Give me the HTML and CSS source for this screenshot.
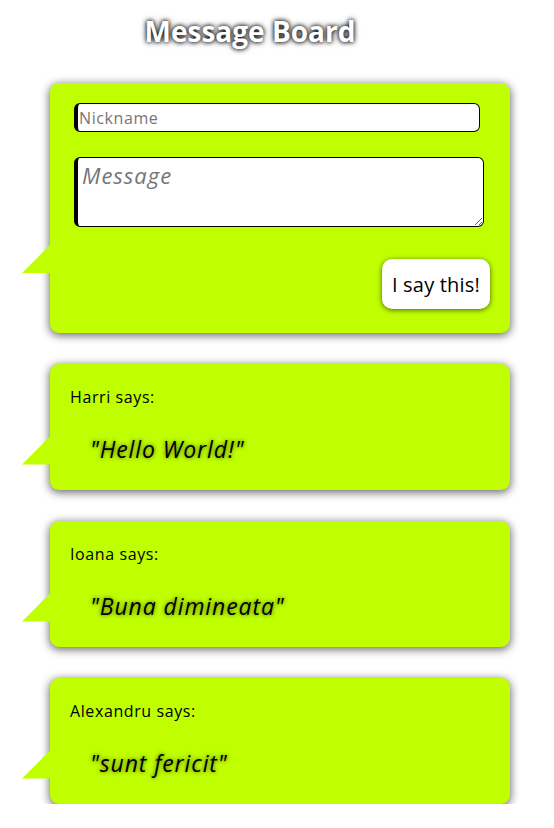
FILE: index.html
```html
<!DOCTYPE html>
<html>
<head>
<meta charset="utf-8">
<link rel="stylesheet" href="styles.css">
</head>
<body>
<h1 class="title">Message Board</h1>
<div class="board">
  <form class="card form-card">
    <input class="nick" type="text" placeholder="Nickname">
    <textarea class="msg" placeholder="Message"></textarea>
    <div class="actions"><button class="say" type="button">I say this!</button></div>
    <span class="tail tail-form"></span>
  </form>
  <div class="card post">
    <div class="author">Harri says:</div>
    <div class="quote">"Hello World!"</div>
    <span class="tail tail-post"></span>
  </div>
  <div class="card post">
    <div class="author">Ioana says:</div>
    <div class="quote">"Buna dimineata"</div>
    <span class="tail tail-post"></span>
  </div>
  <div class="card post">
    <div class="author">Alexandru says:</div>
    <div class="quote">"sunt fericit"</div>
    <span class="tail tail-post"></span>
  </div>
</div>
</body>
</html>
```
FILE: styles.css
```css
html, body {
  margin: 0;
  padding: 0;
  background: #fff;
}
body {
  font-family: "Open Sans", "Liberation Sans", sans-serif;
  color: #000;
}
.title {
  margin: 0;
  width: 500px;
  padding-top: 13px;
  text-align: center;
  font-size: 28px;
  line-height: 37px;
  font-weight: 700;
  color: #fff;
  text-shadow: 0 0 4px #000, 0 0 6px rgba(0,0,0,0.7);
}
.board {
  display: flex;
  flex-direction: column;
  gap: 30.5px;
  padding: 33px 0 0 50px;
}
.card {
  position: relative;
  width: 460px;
  box-sizing: border-box;
  background: #bfff00;
  border-radius: 9px;
  box-shadow: 0 2px 8px 1px rgba(0,0,0,0.55);
  margin: 0;
}
.form-card {
  height: 250px;
  padding: 20px 26px 0 24px;
  display: flex;
  flex-direction: column;
}
.nick {
  width: 406px;
  height: 29px;
  box-sizing: border-box;
  border: 1px solid #000;
  border-left: 4px solid #000;
  border-radius: 6px;
  padding: 0 0 0 1px;
  font-family: inherit;
  font-size: 16px;
  letter-spacing: 0.6px;
  background: #fff;
  outline: none;
}
.msg {
  margin-top: 25px;
  width: 410px;
  height: 70px;
  box-sizing: border-box;
  border: 1px solid #000;
  border-left: 4px solid #000;
  border-radius: 6px;
  padding: 2px 4px;
  font-family: inherit;
  font-size: 22px;
  letter-spacing: 1px;
  background: #fff;
  outline: none;
}
.nick::placeholder { color: #757575; }
.msg::placeholder { color: #757575; font-style: italic; }
.actions {
  display: flex;
  justify-content: flex-end;
  margin-top: 32px;
  margin-right: -6px;
}
.say {
  width: 108px;
  height: 50px;
  background: #fff;
  border: none;
  border-radius: 10px;
  box-shadow: 0 1px 5px rgba(60,80,0,0.9);
  font-family: inherit;
  font-size: 20px;
  letter-spacing: 0.2px;
  color: #000;
  padding: 0;
}
.post {
  height: 126.5px;
  padding: 22px 20px 0 20px;
}
.author {
  font-size: 16px;
  line-height: 22px;
  font-weight: 500;
  letter-spacing: 0.6px;
}
.quote {
  margin-top: 26px;
  padding-left: 20px;
  font-size: 23px;
  line-height: 30px;
  font-style: italic;
  letter-spacing: 0.9px;
  text-shadow: 0 0 4px rgba(40,60,0,0.8);
}
.tail {
  position: absolute;
  left: -28px;
  width: 28px;
  height: 28px;
  background: #bfff00;
  clip-path: polygon(100% 0, 100% 100%, 0 100%);
}
.tail-form { top: 162px; }
.tail-post { top: 73px; }
```
